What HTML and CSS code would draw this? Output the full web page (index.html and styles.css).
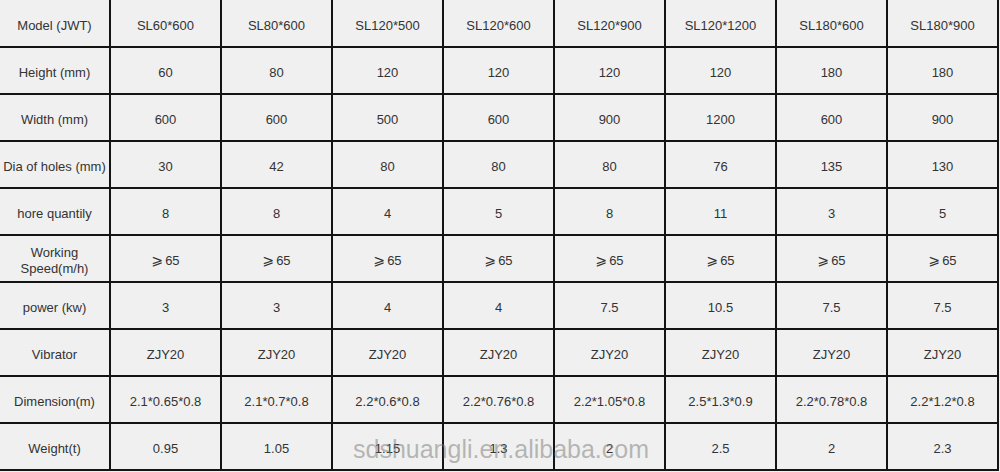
FILE: index.html
```html
<!DOCTYPE html>
<html>
<head>
<meta charset="utf-8">
<link rel="stylesheet" href="styles.css">
</head>
<body>
<div class="page">
  <div class="spec">
    <div class="cell">Model (JWT)</div><div class="cell">SL60*600</div><div class="cell">SL80*600</div><div class="cell">SL120*500</div><div class="cell">SL120*600</div><div class="cell">SL120*900</div><div class="cell">SL120*1200</div><div class="cell">SL180*600</div><div class="cell">SL180*900</div>
    <div class="cell">Height (mm)</div><div class="cell">60</div><div class="cell">80</div><div class="cell">120</div><div class="cell">120</div><div class="cell">120</div><div class="cell">120</div><div class="cell">180</div><div class="cell">180</div>
    <div class="cell">Width (mm)</div><div class="cell">600</div><div class="cell">600</div><div class="cell">500</div><div class="cell">600</div><div class="cell">900</div><div class="cell">1200</div><div class="cell">600</div><div class="cell">900</div>
    <div class="cell">Dia of holes (mm)</div><div class="cell">30</div><div class="cell">42</div><div class="cell">80</div><div class="cell">80</div><div class="cell">80</div><div class="cell">76</div><div class="cell">135</div><div class="cell">130</div>
    <div class="cell">hore quantily</div><div class="cell">8</div><div class="cell">8</div><div class="cell">4</div><div class="cell">5</div><div class="cell">8</div><div class="cell">11</div><div class="cell">3</div><div class="cell">5</div>
    <div class="cell two">Working<br>Speed(m/h)</div><div class="cell"><span class="ge">⩾</span>65</div><div class="cell"><span class="ge">⩾</span>65</div><div class="cell"><span class="ge">⩾</span>65</div><div class="cell"><span class="ge">⩾</span>65</div><div class="cell"><span class="ge">⩾</span>65</div><div class="cell"><span class="ge">⩾</span>65</div><div class="cell"><span class="ge">⩾</span>65</div><div class="cell"><span class="ge">⩾</span>65</div>
    <div class="cell">power (kw)</div><div class="cell">3</div><div class="cell">3</div><div class="cell">4</div><div class="cell">4</div><div class="cell">7.5</div><div class="cell">10.5</div><div class="cell">7.5</div><div class="cell">7.5</div>
    <div class="cell">Vibrator</div><div class="cell">ZJY20</div><div class="cell">ZJY20</div><div class="cell">ZJY20</div><div class="cell">ZJY20</div><div class="cell">ZJY20</div><div class="cell">ZJY20</div><div class="cell">ZJY20</div><div class="cell">ZJY20</div>
    <div class="cell">Dimension(m)</div><div class="cell">2.1*0.65*0.8</div><div class="cell">2.1*0.7*0.8</div><div class="cell">2.2*0.6*0.8</div><div class="cell">2.2*0.76*0.8</div><div class="cell">2.2*1.05*0.8</div><div class="cell">2.5*1.3*0.9</div><div class="cell">2.2*0.78*0.8</div><div class="cell">2.2*1.2*0.8</div>
    <div class="cell">Weight(t)</div><div class="cell">0.95</div><div class="cell">1.05</div><div class="cell">1.15</div><div class="cell">1.3</div><div class="cell">2</div><div class="cell">2.5</div><div class="cell">2</div><div class="cell">2.3</div>
  </div>
  <div class="watermark">sdshuangli.en.alibaba.com</div>
</div>
</body>
</html>
```
FILE: styles.css
```css
html, body {
  margin: 0;
  padding: 0;
  background: #f0f0f0;
}
.page {
  position: relative;
  width: 1000px;
  height: 472px;
  overflow: hidden;
  background: #f0f0f0;
}
.spec {
  display: grid;
  grid-template-columns: repeat(9, 111px);
  grid-template-rows: 48px repeat(9, 47px);
  font-family: "Liberation Sans", Arial, sans-serif;
  font-size: 13px;
  color: #333333;
}
.cell {
  box-sizing: border-box;
  border-right: 2px solid #141414;
  border-bottom: 2px solid #141414;
  display: flex;
  align-items: center;
  justify-content: center;
  text-align: center;
  padding-top: 4px;
  line-height: 15px;
  white-space: nowrap;
}
.cell.two {
  line-height: 16px;
}
.ge {
  font-family: "DejaVu Sans", "Noto Sans CJK SC", sans-serif;
  font-size: 14px;
  margin-right: 2px;
}
.watermark {
  position: absolute;
  left: 353px;
  top: 437px;
  font-family: "Liberation Sans", Arial, sans-serif;
  font-size: 25px;
  line-height: 25px;
  color: rgba(120, 120, 120, 0.5);
  white-space: nowrap;
}
```
